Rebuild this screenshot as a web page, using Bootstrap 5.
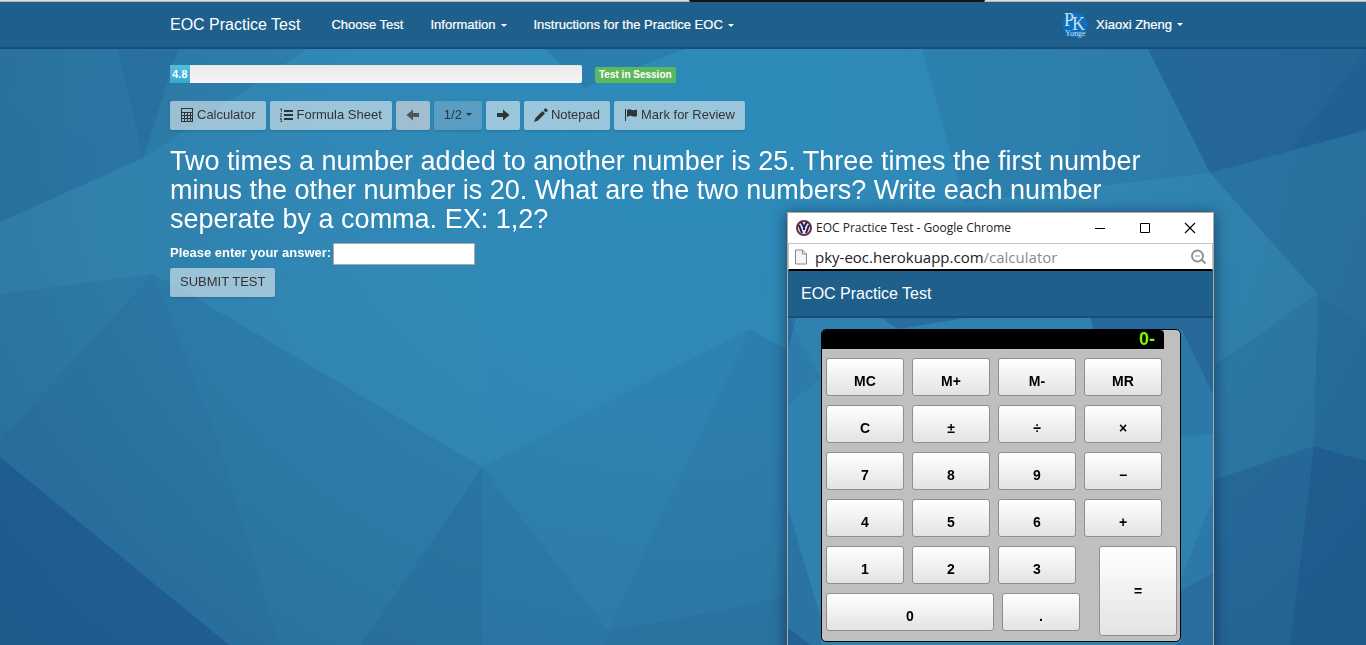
<!DOCTYPE html>
<html lang="en">
<head>
<meta charset="utf-8">
<meta name="viewport" content="width=device-width, initial-scale=1">
<title>EOC Practice Test</title>
<link href="https://cdn.jsdelivr.net/npm/bootstrap@5.3.0/dist/css/bootstrap.min.css" rel="stylesheet">
<style>
  body { font-family: "Liberation Sans", Arial, sans-serif; font-size: 13px; line-height: 18px; color: #fff; background: #2b77a5; min-height: 100vh; }
  .backdrop { position: fixed; inset: 0; width: 100%; height: 100%; z-index: -1; }
  .page-width { max-width: 1026px; width: 100%; margin: 0 auto; }
  .top-strip { height: 2px; background: linear-gradient(#dcdddd 50%, #b4b6b8 50%); }
  .top-strip div { height: 2px; width: 296px; background: #10130f; margin-left: calc(50% + 6px); border-radius: 0 0 2px 2px; }
  .site-bar { background: #1f5f8b; border-bottom: 2px solid #1a4b7b; height: 47px; padding: 0; --bs-navbar-nav-link-padding-x: 13px; }
  .site-bar .navbar-brand { color: #fff; font-size: 16px; line-height: 20px; padding: 0; margin: 0; }
  .site-links { margin-left: 18px; gap: 1px; }
  .site-bar .nav-link { color: #fff; padding-top: 0; padding-bottom: 0; line-height: 20px; -webkit-text-stroke: 0.2px #fff; }
  .site-bar .user-link { padding-right: 13px; }
  .dropdown-toggle::after { border-width: 3px 3px 0; margin-left: 5px; vertical-align: 2px; }
  .test-progress { width: 412px; height: 18px; border-radius: 2px; background: linear-gradient(#e9e9e9, #f6f6f6); }
  .test-progress .progress-bar { background: linear-gradient(#56bcdc, #35aacf); font-size: 11px; font-weight: bold; }
  .state-badge { background: #5cb85c; font-size: 10px; line-height: 16px; padding: 0 4px; border-radius: 2px; margin: 2px 0 0 13px; }
  .toolbar { margin-top: 18px; }
  .tool { height: 29px; padding: 0 10px 2px; font-size: 13px; line-height: 18px; color: #333; background: rgba(235, 242, 245, .58); border: 0; border-radius: 2px; box-shadow: 0 1px 2px rgba(0, 50, 90, .25); display: inline-flex; align-items: center; }
  .tool svg { width: 14px; height: 14px; fill: #2f3437; }
  .tool svg + span { margin-left: 3px; }
  .tool-off { background: rgba(230, 222, 222, .62); }
  .tool-off svg { opacity: .75; }
  .tool-page { background: rgba(160, 190, 212, .38); }
  .tool-page::after { margin-left: 4px; }
  .question { font-size: 27px; line-height: 29px; font-weight: 400; margin: 17px 0 9px; }
  .answer-line { gap: 2px; margin-bottom: 3px; }
  .answer-line label { line-height: 20px; }
  .answer { width: 142px; height: 22px; border: 1px solid #a9a9a9; border-radius: 0; padding: 1px 4px; }
  .popup { position: fixed; top: 212px; right: 152px; width: 427px; min-height: 480px; border: 1px solid #b9a79c; box-shadow: 0 2px 14px rgba(0, 20, 50, .6); font-size: 13px; overflow: hidden; background: #2b7cab; }
  .popup-title { height: 30px; background: #fff; color: #222; font: 12px/18px "Open Sans", sans-serif; padding: 0 17px 0 8px; }
  .win-controls { gap: 33px; }
  .win-btn { border: 0; background: none; padding: 0; width: 12px; height: 12px; display: flex; }
  .address { height: 28px; background: #fff; border: 1px solid #c3c3cb; border-bottom: 2px solid #000; color: #222; font: 15px/24px "Open Sans", sans-serif; padding: 0 5px 0 6px; }
  .address span { color: #8b8b8b; }
  .popup .navbar-brand { padding-left: 13px; }
  .popup-view { position: relative; padding: 11px 33px 48px; }
  .popup-view .facets { position: absolute; inset: 0; width: 100%; height: 100%; }
  .calc { position: relative; width: 360px; border: 1px solid #000; border-radius: 5px; background: #bfbfbf; }
  .readout { width: 342px; height: 19px; background: #000; color: #7cfc00; border-radius: 4px 4px 0 0; font-size: 18px; line-height: 19px; font-weight: bold; text-align: right; padding-right: 9px; }
  .keys { padding: 9px 3px 5px 4px; }
  .keys, .key-rows { display: flex; flex-direction: column; gap: 9px; }
  .key-line { display: flex; gap: 8px; }
  .key { width: 78px; height: 38px; border: 1px solid #8f8f8f; border-radius: 3px; background: linear-gradient(#fff, #e3e3e3); color: #000; font-size: 14px; font-weight: bold; line-height: 18px; padding: 7px 0 0; text-align: center; }
  .key-wide { width: 168px; }
  .key-tall { height: 90px; padding: 0; margin-left: auto; }
</style>
</head>
<body>
<svg class="backdrop" viewBox="0 0 1366 645" preserveAspectRatio="none" aria-hidden="true">
  <defs>
    <radialGradient id="glow" gradientUnits="userSpaceOnUse" cx="690" cy="110" r="900" gradientTransform="matrix(1 0 0 .9 0 0)">
      <stop offset="0" stop-color="#2c8bba"/><stop offset=".4" stop-color="#3188b6"/><stop offset=".7" stop-color="#2f7faa"/><stop offset="1" stop-color="#29709c"/>
    </radialGradient>
  </defs>
  <rect width="1366" height="645" fill="url(#glow)"/>
  <g fill="#1a4f85">
    <path d="M0 49H118L143 158L0 108Z" opacity=".22"/>
    <path d="M118 49H178L143 158Z" opacity=".36"/>
    <path d="M178 49H307L143 158Z" opacity=".16"/>
    <path d="M0 108L143 158L0 222Z" opacity=".24"/>
    <path d="M0 294L153 274L0 440Z" opacity=".12"/>
    <path d="M153 274L0 440V457L229 645H279L218 440Z" opacity=".22"/>
    <path d="M0 457L229 645H0Z" opacity=".66"/>
    <path d="M153 274L192 296L482 467L361 645H279L218 440Z" opacity=".16"/>
    <path d="M482 467L361 645H482Z" opacity=".3"/>
    <path d="M482 467V645H604L608 631Z" opacity=".2"/>
    <path d="M608 631L683 617L787 596V645H604Z" opacity=".26"/>
    <path d="M482 467L750 329L608 631Z" opacity=".1"/>
    <path d="M750 329L787 350V596L608 631Z" opacity=".18"/>
    <path d="M546 49H685L584 88Z" opacity=".2"/>
    <path d="M922 49H1148L1210 173L964 202Z" opacity=".16"/>
    <path d="M1148 49H1366V130L1210 173Z" opacity=".54"/>
    <path d="M1366 49V130L1290 151Z" opacity=".2"/>
    <path d="M1210 173L1318 294L1366 329V130Z" opacity=".28"/>
    <path d="M1318 294L1366 329V461L1314 446Z" opacity=".36"/>
    <path d="M1214 365L1318 294L1314 446L1214 480Z" opacity=".16"/>
    <path d="M1214 480L1314 446L1290 645H1214Z" opacity=".42"/>
    <path d="M1314 446L1366 461V645H1290Z" opacity=".68"/>
  </g>
  <g fill="#4aa0b8">
    <path d="M0 222L143 158L153 274L0 294Z" opacity=".06"/>
    <path d="M192 296L490 239L482 467Z" opacity=".05"/>
  </g>
</svg>

<div class="top-strip"><div></div></div>
<nav class="navbar navbar-expand site-bar">
  <div class="page-width d-flex align-items-center">
    <a class="navbar-brand" href="#">EOC Practice Test</a>
    <ul class="navbar-nav site-links">
      <li class="nav-item"><a class="nav-link" href="#">Choose Test</a></li>
      <li class="nav-item"><a class="nav-link dropdown-toggle" href="#">Information</a></li>
      <li class="nav-item"><a class="nav-link dropdown-toggle" href="#">Instructions for the Practice EOC</a></li>
    </ul>
    <a class="nav-link user-link dropdown-toggle ms-auto d-flex align-items-center" href="#">
      <svg class="me-2" width="26" height="26" viewBox="0 0 26 26" aria-hidden="true">
        <circle cx="13" cy="13" r="12.5" fill="#0e70bd"/>
        <g fill="#c8e0f2" font-family="Liberation Serif, serif">
          <text font-size="18"><tspan x="2" y="14">P</tspan><tspan x="10" y="18">K</tspan><tspan x="3" y="24" font-size="8">Yonge</tspan></text>
        </g>
      </svg>Xiaoxi Zheng</a>
  </div>
</nav>

<main class="page-width">
  <div class="d-flex pt-3">
    <div class="progress test-progress" role="progressbar" aria-label="Test progress" aria-valuenow="4.8" aria-valuemin="0" aria-valuemax="100">
      <div class="progress-bar" style="width: 4.8%">4.8</div>
    </div>
    <span class="badge state-badge align-self-start">Test in Session</span>
  </div>
  <div class="toolbar d-flex flex-wrap gap-1">
    <button class="btn tool" type="button"><svg viewBox="0 0 14 14"><path fill-rule="evenodd" d="M1 0h12v14H1zM2 1v3h10V1zM2 5v2h2V5zm3 0v2h2V5zm3 0v2h2V5zm3 0v2h1V5zM2 8v2h2V8zm3 0v2h2V8zm3 0v2h2V8zm3 0v2h1V8zM2 11v2h2v-2zm3 0v2h2v-2zm3 0v2h2v-2zm3 0v2h1v-2z"/></svg><span>Calculator</span></button>
    <button class="btn tool" type="button"><svg viewBox="0 0 14 14"><path d="M4 2h9v2H4zM4 6h9v2H4zM4 10h9v2H4z"/><path d="M1 0h1v4H1zM0 1h1v1H0zM0 5h2v2H1v1h1v1H0V7h1V6H0zM0 10h2v4H0v-1h1v-1H0z" opacity=".7"/></svg><span>Formula Sheet</span></button>
    <button class="btn tool tool-off" type="button" aria-label="Previous question"><svg viewBox="0 0 14 14"><path d="M.500 7L7 1.500V5h6v4H7v3.500z"/></svg></button>
    <button class="btn tool tool-page dropdown-toggle" type="button">1/2</button>
    <button class="btn tool" type="button" aria-label="Next question"><svg viewBox="0 0 14 14"><path d="M13.500 7L7 1.500V5H1v4h6v3.500z"/></svg></button>
    <button class="btn tool" type="button"><svg viewBox="0 0 14 14"><path d="M0 14l1.500-4 7-7 2.500 2.500-7 7zM9.500 2L11.500 0 14 2.500 12 4.500z"/></svg><span>Notepad</span></button>
    <button class="btn tool" type="button"><svg viewBox="0 0 14 14"><path d="M1 1h1v12H1zM3 2c3-2 5 1 8 0l2-.5V8c-3 2-5-1-8 0L3 9z"/></svg><span>Mark for Review</span></button>
  </div>
  <h3 class="question">Two times a number added to another number is 25. Three times the first number minus the other number is 20. What are the two numbers? Write each number seperate by a comma. EX: 1,2?</h3>
  <form>
    <div class="answer-line d-flex">
      <label class="fw-bold" for="answer">Please enter your answer:</label>
      <input class="answer" id="answer" type="text">
    </div>
    <button class="btn tool" type="button">SUBMIT TEST</button>
  </form>
</main>

<section class="popup" aria-label="Calculator window">
  <header class="popup-title d-flex align-items-center">
    <svg class="me-1" width="16" height="16" viewBox="0 0 16 16" aria-hidden="true"><circle cx="8" cy="8" r="7" fill="#f3e7df" stroke="#68313f" stroke-width="2"/><path d="M5 2l3 5 3-5M8 7v3M3 5l3 8M13 5l-3 8" fill="none" stroke="#1d1a69" stroke-width="2"/></svg>
    <div class="flex-grow-1">EOC Practice Test - Google Chrome</div>
    <div class="win-controls d-flex">
      <button class="win-btn" type="button" aria-label="Minimize"><svg width="12" height="12"><path d="M1 6.500h10" stroke="#000"/></svg></button>
      <button class="win-btn" type="button" aria-label="Maximize"><svg width="12" height="12"><path d="M1.500 1.500h9v9h-9z" fill="none" stroke="#000"/></svg></button>
      <button class="win-btn" type="button" aria-label="Close"><svg width="12" height="12"><path d="M1 1l10 10M11 1L1 11" stroke="#000" stroke-width="1.200"/></svg></button>
    </div>
  </header>
  <div class="address d-flex align-items-center">
    <svg class="me-2" width="12" height="16" viewBox="0 0 12 16" aria-hidden="true"><path d="M.500 1h7l4 4v10H.500zM7.500 1v4h4" fill="#f5f5f5" stroke="#888"/></svg>
    <div class="flex-grow-1">pky-eoc.herokuapp.com<span>/calculator</span></div>
    <svg width="16" height="16" viewBox="0 0 16 16" aria-hidden="true"><path d="M4 7h5" stroke="#929292"/><path d="M10.500 10.500l4 4" stroke="#929292" stroke-width="2"/><circle cx="6.500" cy="7" r="5.500" fill="none" stroke="#929292" stroke-width="2"/></svg>
  </div>
  <div class="navbar site-bar"><a class="navbar-brand" href="#">EOC Practice Test</a></div>
  <div class="popup-view">
    <svg class="facets" viewBox="0 0 425 371" preserveAspectRatio="none" aria-hidden="true">
      <rect width="425" height="371" fill="#2f81af"/>
      <g fill="#1d4f85">
        <path d="M0 0H8L0 30Z" opacity=".3"/>
        <path d="M0 0L33 60L0 87Z" opacity=".1"/>
        <path d="M94 0H177L110 11Z" opacity=".4"/>
        <path d="M303 0H425V76L394 12L305 12Z" opacity=".5"/>
        <path d="M393 10L425 76V115L393 119Z" opacity=".15"/>
        <path d="M393 260L425 180V254L393 272Z" opacity=".15"/>
        <path d="M0 190L33 300V327H0Z" opacity=".25"/>
        <path d="M0 309L24 327V371H0Z" opacity=".5"/>
        <path d="M393 272L425 254V371H320L393 323Z" opacity=".4"/>
      </g>
    </svg>
    <div class="calc">
      <div class="readout">0-</div>
      <div class="keys">
        <div class="key-line"><button class="key">MC</button><button class="key">M+</button><button class="key">M-</button><button class="key">MR</button></div>
        <div class="key-line"><button class="key">C</button><button class="key">±</button><button class="key">÷</button><button class="key">×</button></div>
        <div class="key-line"><button class="key">7</button><button class="key">8</button><button class="key">9</button><button class="key">−</button></div>
        <div class="key-line"><button class="key">4</button><button class="key">5</button><button class="key">6</button><button class="key">+</button></div>
        <div class="key-line">
          <div class="key-rows">
            <div class="key-line"><button class="key">1</button><button class="key">2</button><button class="key">3</button></div>
            <div class="key-line"><button class="key key-wide">0</button><button class="key">.</button></div>
          </div>
          <button class="key key-tall">=</button>
        </div>
      </div>
    </div>
  </div>
</section>
<script src="https://cdn.jsdelivr.net/npm/bootstrap@5.3.0/dist/js/bootstrap.bundle.min.js"></script>
</body>
</html>
